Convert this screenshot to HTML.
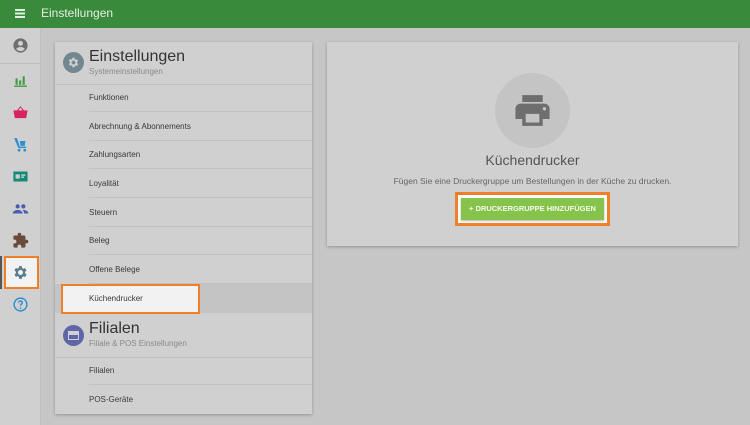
<!DOCTYPE html><html><head><meta charset="utf-8"><style>
*{box-sizing:border-box;margin:0;padding:0}
body{width:750px;height:425px;overflow:hidden;background:#c6c6c6;font-family:"Liberation Sans",sans-serif;position:relative}
.top{position:absolute;left:0;top:0;width:750px;height:28px;background:#3a8a3c;color:#e4eee4;font-size:12px}
.side{position:absolute;left:0;top:28px;width:41px;height:397px;background:#d0d0d0;border-right:1px solid #c0c0c0}
.ic{position:absolute;left:12px;width:17px;height:17px}
.card{position:absolute;background:#d0d0d0;box-shadow:0 1px 3px rgba(0,0,0,.25)}
.it{position:absolute;left:34px;right:0;height:28px;border-bottom:1px solid #c2c2c2;font-size:8px;color:#3a3a3a;line-height:28px}
.h{position:absolute;left:34px;font-size:16px;color:#333}
.s{position:absolute;left:34px;font-size:8px;color:#8a8a8a}
</style></head><body>
<div class="top"><div style="position:absolute;left:15px;top:9px;width:10px;height:1.5px;background:#e4eee4;box-shadow:0 3.5px #e4eee4,0 7px #e4eee4"></div><div style="position:absolute;left:41px;top:6px">Einstellungen</div></div>
<div class="side">
<svg class="ic" style="top:9px" viewBox="0 0 24 24"><path fill="#6e6e6e" d="M12 2a10 10 0 100 20 10 10 0 000-20zm0 3.5a3.5 3.5 0 110 7 3.5 3.5 0 010-7zm0 14.5a8 8 0 01-6-2.8c.1-2 4-3.1 6-3.1s5.9 1.1 6 3.1A8 8 0 0112 20z"/></svg>
<div style="position:absolute;left:0;top:35px;width:41px;height:1px;background:#c0c0c0"></div>
<svg class="ic" style="top:44px" viewBox="0 0 24 24"><path fill="#3f9a40" d="M3 19h18v2H3zM5 9h3v9H5zM10 12h3v6h-3zM15 6h3v12h-3z"/></svg>
<svg class="ic" style="top:76px" viewBox="0 0 24 24"><path fill="#d8245c" d="M2 9h20l-2 11H4zM7 9l5-6 5 6h-2l-3-4-3 4z"/></svg>
<svg class="ic" style="top:108px" viewBox="0 0 24 24"><path fill="#2d8fd1" d="M3 3h4l4 12h9v2H9zM11 7h8l-1 7h-6zM10 18a2 2 0 100 4 2 2 0 000-4zM18 18a2 2 0 100 4 2 2 0 000-4z"/></svg>
<svg class="ic" style="top:140px" viewBox="0 0 24 24"><path fill="#138a78" d="M2 5h20v14H2zM5 9v6h6V9zM13 9v2h6V9zM13 12v2h4v-2z"/><rect x="6" y="10" width="4" height="4" fill="#d0d0d0"/></svg>
<svg class="ic" style="top:172px" viewBox="0 0 24 24"><path fill="#4a5fb0" d="M8 6a3 3 0 100 6 3 3 0 000-6zM16 6a3 3 0 100 6 3 3 0 000-6zM1 19c0-3 4-5 7-5s7 2 7 5zM15 14c3 0 8 1 8 5h-6c0-2-1-4-2-5z"/></svg>
<svg class="ic" style="top:204px" viewBox="0 0 24 24"><path fill="#6a4a3a" d="M20.5 11H19V7a2 2 0 00-2-2h-4V3.5a2.5 2.5 0 00-5 0V5H4a2 2 0 00-2 2v3.8h1.5a2.7 2.7 0 010 5.4H2V20a2 2 0 002 2h3.8v-1.5a2.7 2.7 0 015.4 0V22H17a2 2 0 002-2v-4h1.5a2.5 2.5 0 000-5z"/></svg>
<div style="position:absolute;left:0;top:228px;width:2px;height:33px;background:#555"></div>
<div style="position:absolute;left:4px;top:228px;width:35px;height:33px;background:#f2f2f2;border:2px solid #f07f2a"></div>
<svg class="ic" style="top:236px" viewBox="0 0 24 24"><path fill="#5b7d8c" d="M19.4 13a7.5 7.5 0 000-2l2.1-1.6-2-3.5-2.5 1a7 7 0 00-1.7-1L15 3h-4l-.4 2.6a7 7 0 00-1.7 1l-2.5-1-2 3.5L6.6 11a7.5 7.5 0 000 2l-2.1 1.6 2 3.5 2.5-1a7 7 0 001.7 1L11 21h4l.4-2.6a7 7 0 001.7-1l2.5 1 2-3.5zM13 15.5a3.5 3.5 0 110-7 3.5 3.5 0 010 7z" transform="translate(-1 0)"/></svg>
<svg class="ic" style="top:268px" viewBox="0 0 24 24"><circle cx="12" cy="12" r="9" fill="none" stroke="#2d8fd1" stroke-width="2"/><path d="M9.5 9.5a2.5 2.5 0 115 0c0 2-2.5 2-2.5 4" fill="none" stroke="#2d8fd1" stroke-width="2"/><circle cx="12" cy="17" r="1.2" fill="#2d8fd1"/></svg>
</div>
<div class="card" style="left:55px;top:42px;width:257px;height:372px">
<div style="position:absolute;left:8px;top:10px;width:21px;height:21px;border-radius:50%;background:#728790"></div>
<svg style="position:absolute;left:12px;top:14px;width:13px;height:13px" viewBox="0 0 24 24"><path fill="#d0d0d0" d="M19.4 13a7.5 7.5 0 000-2l2.1-1.6-2-3.5-2.5 1a7 7 0 00-1.7-1L15 3h-4l-.4 2.6a7 7 0 00-1.7 1l-2.5-1-2 3.5L6.6 11a7.5 7.5 0 000 2l-2.1 1.6 2 3.5 2.5-1a7 7 0 001.7 1L11 21h4l.4-2.6a7 7 0 001.7-1l2.5 1 2-3.5zM13 15.5a3.5 3.5 0 110-7 3.5 3.5 0 010 7z" transform="translate(-1 0)"/></svg>
<div class="h" style="top:6px">Einstellungen</div><div class="s" style="top:25px">Systemeinstellungen</div>
<div style="position:absolute;left:0;right:0;top:42px;height:1px;background:#c2c2c2"></div>
<div class="it" style="top:42px">Funktionen</div>
<div class="it" style="top:71px">Abrechnung &amp; Abonnements</div>
<div class="it" style="top:99px">Zahlungsarten</div>
<div class="it" style="top:128px">Loyalität</div>
<div class="it" style="top:157px">Steuern</div>
<div class="it" style="top:185px">Beleg</div>
<div class="it" style="top:214px">Offene Belege</div>
<div style="position:absolute;left:0;right:0;top:242px;height:29px;background:#c4c4c4"></div>
<div style="position:absolute;left:6px;top:242px;width:139px;height:30px;background:#f2f2f2;border:2px solid #f07f2a;font-size:8px;color:#3a3a3a;line-height:26px;padding-left:26px">Küchendrucker</div>
<div style="position:absolute;left:8px;top:283px;width:21px;height:21px;border-radius:50%;background:#5e66a8"></div>
<div style="position:absolute;left:13px;top:289px;width:11px;height:9px;background:#d0d0d0"></div><div style="position:absolute;left:14px;top:293px;width:9px;height:4px;background:#5e66a8"></div>
<div class="h" style="top:278px">Filialen</div><div class="s" style="top:297px">Filiale &amp; POS Einstellungen</div>
<div style="position:absolute;left:0;right:0;top:315px;height:1px;background:#c2c2c2"></div>
<div class="it" style="top:315px">Filialen</div>
<div class="it" style="top:344px;border:none">POS-Geräte</div>
</div>
<div class="card" style="left:327px;top:42px;width:411px;height:204px">
<div style="position:absolute;left:168px;top:31px;width:75px;height:75px;border-radius:50%;background:#c4c4c4"></div>
<svg style="position:absolute;left:185px;top:48px;width:41px;height:41px" viewBox="0 0 24 24"><path fill="#6e6e6e" d="M19 8H5a3 3 0 00-3 3v6h4v4h12v-4h4v-6a3 3 0 00-3-3zm-3 11H8v-5h8zm3-7a1 1 0 110-2 1 1 0 010 2zM18 3H6v4h12z"/></svg>
<div style="position:absolute;left:0;right:0;top:110px;text-align:center;font-size:14px;color:#555">Küchendrucker</div>
<div style="position:absolute;left:0;right:0;top:134px;text-align:center;font-size:8.5px;color:#666">Fügen Sie eine Druckergruppe um Bestellungen in der Küche zu drucken.</div>
<div style="position:absolute;left:128px;top:150px;width:155px;height:34px;background:#fff;border:3px solid #f07f2a"></div>
<div style="position:absolute;left:134px;top:156px;width:143px;height:22px;background:#86c34a;color:#f4fbee;font-size:7.5px;font-weight:bold;text-align:center;line-height:22px;box-shadow:0 1px 2px rgba(0,0,0,.3)">+ DRUCKERGRUPPE HINZUFÜGEN</div>
</div>
</body></html>
